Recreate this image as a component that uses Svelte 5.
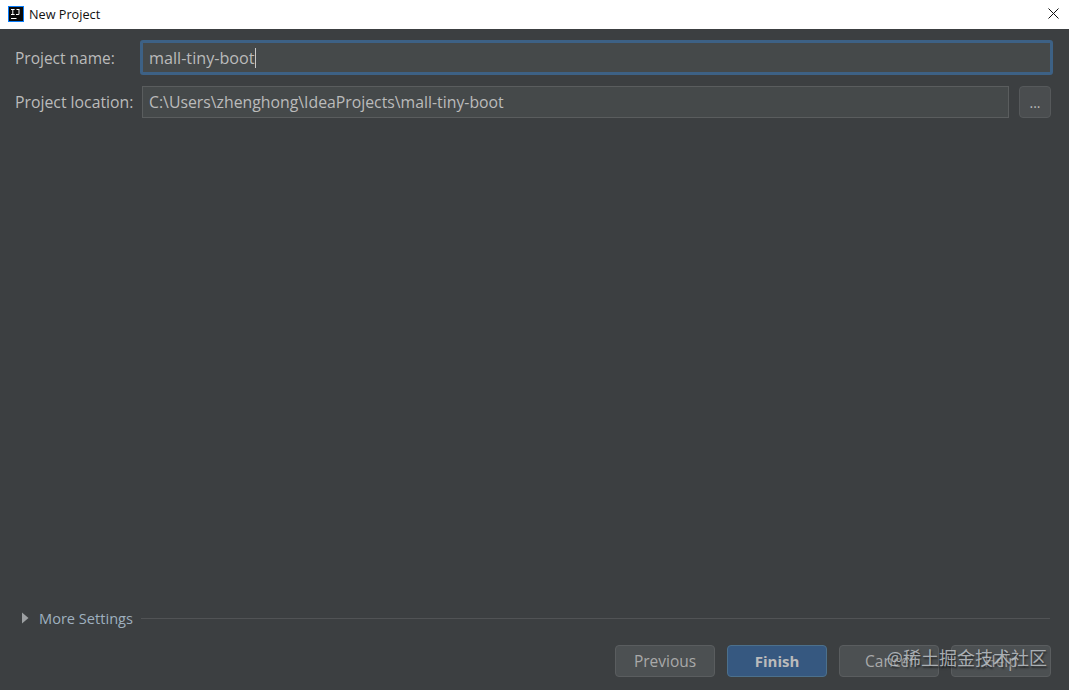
<script>
  const buttons = [
    { label: 'Previous', primary: false },
    { label: 'Finish', primary: true },
    { label: 'Cancel', primary: false },
    { label: 'Help', primary: false }
  ];
</script>

<div class="window">
  <header class="titlebar">
    <svg class="logo" width="16" height="16" viewBox="0 0 16 16" aria-hidden="true">
      <rect x="0.5" y="0.5" width="15" height="15" fill="#0a0a0a" stroke="#087cfa" />
      <rect x="3" y="12" width="5.500" height="1" fill="#fff" />
      <path d="M3 3h3.600v1H5.300v4h1.300v1H3V8h1.300V4H3zM8.500 3h3v4.700q0 1.300-1.300 1.300H8V8h2q.5 0 .5-.5V4h-2z" fill="#fff" />
    </svg>
    <span class="title">New Project</span>
    <svg class="close" width="11" height="11" viewBox="0 0 11 11" aria-hidden="true">
      <path d="M.5.500l10 10M10.500.500l-10 10" stroke="#111" stroke-width="1" fill="none" />
    </svg>
  </header>

  <main class="content">
    <div class="form">
      <span class="label">Project name:</span>
      <div class="name-input">mall-tiny-boot<span class="caret"></span></div>
      <span class="label">Project location:</span>
      <div class="location-row">
        <div class="location-input">C:\Users\zhenghong\IdeaProjects\mall-tiny-boot</div>
        <div class="browse">...</div>
      </div>
    </div>

    <div class="spacer"></div>

    <div class="more">
      <svg width="8" height="12" viewBox="0 0 8 12" aria-hidden="true"><path d="M1 .5l6.500 5.500L1 11.500z" fill="#9da0a2" /></svg>
      <span class="more-label">More Settings</span>
      <span class="rule"></span>
    </div>

    <footer class="actions">
      {#each buttons as b}
        <div class="btn" class:primary={b.primary}>{b.label}</div>
      {/each}
    </footer>
  </main>

  <div class="watermark">@稀土掘金技术社区</div>
</div>

<style>
  :global(body) {
    margin: 0;
    background: #3c3f41;
  }

  .window {
    position: relative;
    width: 1069px;
    height: 690px;
    overflow: hidden;
    display: flex;
    flex-direction: column;
    font-family: "Open Sans", "Noto Sans", "Noto Sans CJK SC", sans-serif;
    background: #3c3f41;
    color: #bbbbbb;
  }

  .titlebar {
    height: 29px;
    flex: none;
    background: #fff;
    display: flex;
    align-items: center;
    padding: 0 10px 1px 8px;
    box-sizing: border-box;
  }

  .logo {
    flex: none;
    margin-bottom: 1px;
  }

  .title {
    margin-left: 5px;
    font-size: 12.7px;
    color: #111;
    flex: 1;
  }

  .close {
    flex: none;
    margin-bottom: 1px;
  }

  .content {
    flex: 1;
    display: flex;
    flex-direction: column;
    padding: 11px 18px 13px 15px;
    min-height: 0;
  }

  .form {
    display: grid;
    grid-template-columns: 126px 1fr;
    row-gap: 11px;
    align-items: center;
    font-size: 15.8px;
  }

  .label {
    color: #bbbbbb;
    white-space: nowrap;
  }

  .label:first-child {
    font-size: 15.5px;
  }

  .name-input {
    height: 35px;
    margin: 0 -2px 0 -1px;
    box-sizing: border-box;
    border: 3px solid #3d6185;
    border-radius: 3px;
    background: #45494a;
    padding-left: 6px;
    display: flex;
    align-items: center;
    font-size: 16.2px;
  }

  .caret {
    width: 1px;
    height: 20px;
    background: #c8c8c8;
  }

  .location-row {
    display: flex;
    gap: 10px;
    padding-left: 1px;
  }

  .location-input {
    flex: 1;
    height: 32px;
    box-sizing: border-box;
    border: 1px solid #5a5d5e;
    background: #45494a;
    padding-left: 6px;
    line-height: 30px;
  }

  .browse {
    width: 32px;
    height: 32px;
    box-sizing: border-box;
    border: 1px solid #56595b;
    border-radius: 4px;
    background: #4a4d4f;
    text-align: center;
    font-size: 14px;
    line-height: 32px;
  }

  .spacer {
    flex: 1;
  }

  .more {
    display: flex;
    align-items: center;
    font-size: 14.6px;
    height: 24px;
    padding: 0 1px 0 6px;
  }

  .more-label {
    margin-left: 10px;
    color: #9fb0bf;
  }

  .rule {
    flex: 1;
    height: 1px;
    margin-left: 8px;
    background: #515355;
  }

  .actions {
    display: flex;
    justify-content: flex-end;
    gap: 12px;
    margin-top: 15px;
  }

  .btn {
    width: 100px;
    height: 32px;
    box-sizing: border-box;
    border: 1px solid #5a5d5f;
    border-radius: 4px;
    background: #4c5052;
    text-align: center;
    line-height: 30px;
    font-size: 15.5px;
    color: #a9a9a9;
  }

  .btn.primary {
    background: #365880;
    border-color: #4c708c;
    color: #bbbbbb;
    font-weight: 700;
    font-size: 15px;
  }

  .watermark {
    position: absolute;
    right: 22px;
    top: 646px;
    font-size: 18px;
    line-height: 24px;
    color: rgba(190, 195, 200, 0.85);
    text-shadow: 1px 2px 2px rgba(0, 0, 0, 0.55);
    white-space: nowrap;
  }
</style>
